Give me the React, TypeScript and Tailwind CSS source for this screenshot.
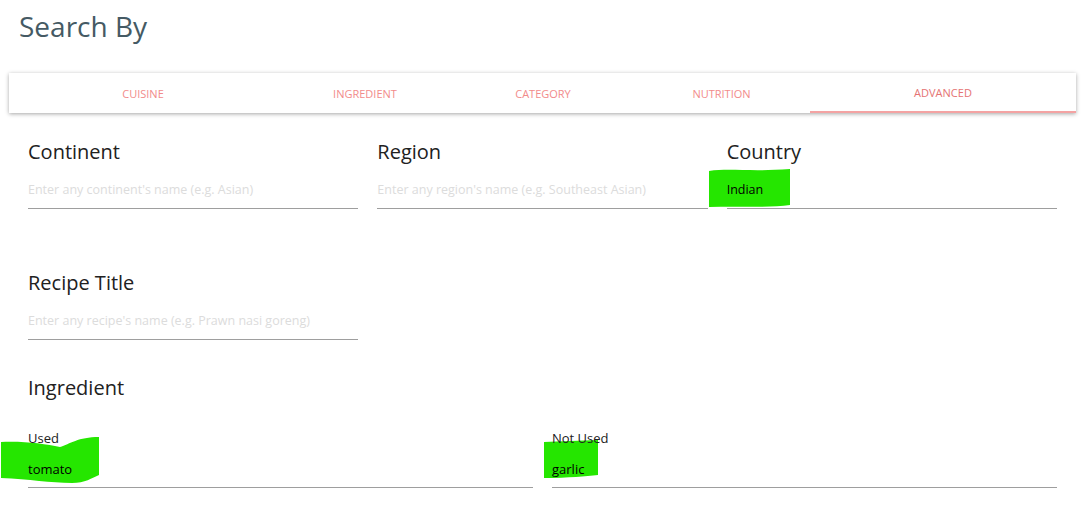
const tabs = [
  { label: "CUISINE", w: "w-[268px]" },
  { label: "INGREDIENT", w: "w-[176px]" },
  { label: "CATEGORY", w: "w-[180px]" },
  { label: "NUTRITION", w: "w-[177px]" },
  { label: "ADVANCED", w: "flex-1", active: true },
];

function Field({ label, placeholder, value }: { label: string; placeholder?: string; value?: string }) {
  return (
    <div>
      <div className="text-[20px] leading-[28px] text-[#212121]">{label}</div>
      <div className="pt-[15px] pb-[9px] text-[12.5px] leading-[18px] border-b border-[#9e9e9e]">
        {value ? (
          <span className="text-black">{value}</span>
        ) : (
          <span className="text-[#dcdcdc]">{placeholder}</span>
        )}
      </div>
    </div>
  );
}

function SubField({ label, value }: { label: string; value: string }) {
  return (
    <div>
      <div className="text-[13px] leading-[18px] text-[#212121]">{label}</div>
      <div className="pt-[13px] pb-[9px] text-[13px] leading-[18px] text-black border-b border-[#9e9e9e]">
        {value}
      </div>
    </div>
  );
}

export default function App() {
  return (
    <div
      className="relative w-full h-[517px] overflow-hidden bg-white"
      style={{ fontFamily: '"Open Sans", "Noto Sans", sans-serif' }}
    >
      {/* highlighter marks */}
      <svg className="absolute inset-0 w-full h-full pointer-events-none" viewBox="0 0 1087 517">
        <path d="M709 171 C730 168 750 172 790 169 L790 205 C770 208 740 206 709 207 Z" fill="#25e600" />
        <path d="M1 442 C25 441 45 444 60 447 C70 444 78 437 99 437 L99 475 C92 478 85 483 72 483 C50 483 30 479 1 478 Z" fill="#25e600" />
        <path d="M544 442 C560 441 580 441 598 440 L598 475 C585 476 570 478 544 478 Z" fill="#25e600" />
      </svg>

      <div className="relative">
        <h1 className="pl-[19px] pt-[8px] text-[28px] leading-[36px] text-[#455a64]">Search By</h1>

        <div className="ml-[9px] mr-[11px] mt-[29px] h-[40px] flex bg-white shadow-[0_1px_4px_rgba(0,0,0,0.35)]">
          {tabs.map((t) => (
            <div
              key={t.label}
              className={`${t.w} flex items-center justify-center pt-[2px] text-[11px] ${
                t.active ? "text-[#e57373] border-b-2 border-[#f4a3a3]" : "text-[#f28b8b]"
              }`}
            >
              {t.label}
            </div>
          ))}
        </div>

        <div className="pl-[28px] pr-[30px] pt-[25px]">
          <div className="grid grid-cols-3 gap-x-[19px]">
            <Field label="Continent" placeholder="Enter any continent's name (e.g. Asian)" />
            <Field label="Region" placeholder="Enter any region's name (e.g. Southeast Asian)" />
            <Field label="Country" value="Indian" />
          </div>

          <div className="grid grid-cols-3 gap-x-[19px] mt-[60px]">
            <Field label="Recipe Title" placeholder="Enter any recipe's name (e.g. Prawn nasi goreng)" />
          </div>

          <div className="mt-[34px] text-[20px] leading-[28px] text-[#212121]">Ingredient</div>
          <div className="grid grid-cols-2 gap-x-[19px] mt-[27px]">
            <SubField label="Used" value="tomato" />
            <SubField label="Not Used" value="garlic" />
          </div>
        </div>
      </div>
    </div>
  );
}
